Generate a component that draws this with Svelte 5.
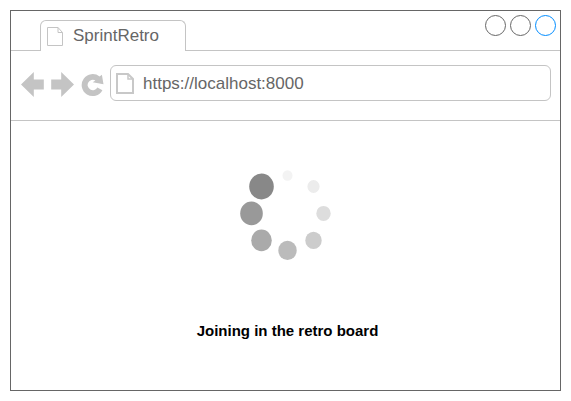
<script>
  const dots = [
    { x: 47.5, y: 15.5, rx: 5, ry: 5.3, fill: '#f3f3f3' },
    { x: 73.5, y: 26.5, rx: 6.1, ry: 6.4, fill: '#ececec' },
    { x: 83.5, y: 53.4, rx: 7.2, ry: 7.5, fill: '#dddddd' },
    { x: 73.5, y: 80.4, rx: 8.2, ry: 8.6, fill: '#cccccc' },
    { x: 47.5, y: 90.4, rx: 9.2, ry: 9.7, fill: '#bbbbbb' },
    { x: 21.5, y: 80.4, rx: 10.3, ry: 10.8, fill: '#aaaaaa' },
    { x: 11.5, y: 53.4, rx: 11.3, ry: 11.9, fill: '#999999' },
    { x: 21.5, y: 26.5, rx: 12.3, ry: 12.9, fill: '#888888' }
  ];
  const controls = ['#666666', '#666666', '#008cff'];
</script>

<div class="window">
  <header class="tabs">
    <div class="tab">
      <svg class="page" width="17" height="20" viewBox="0 0 17 20">
        <path d="M.5 .5H11L15.5 5.5V18.5H.5ZM11 .5V5.5H15.5" fill="none" stroke="#c4c4c4" />
      </svg>
      <span>SprintRetro</span>
    </div>
    <div class="controls">
      {#each controls as color}
        <svg width="21" height="21" viewBox="0 0 21 21">
          <circle cx="10.5" cy="10.5" r="10" fill="none" stroke={color} />
        </svg>
      {/each}
    </div>
  </header>
  <div class="toolbar">
    <svg width="84" height="26" viewBox="0 0 84 26">
      <g fill="#c4c4c4">
        <path d="M0 12.5L12.8 0V7.5H22.8V17.5H12.8V25Z" />
        <path d="M53 12.5L40.2 0V7.5H30.2V17.5H40.2V25Z" />
        <path d="M80.9 2.8L82.5 12.2L71.7 10.3L74.4 8.4A5.2 5.2 0 1 0 76.4 15.4L81.4 18.2A11 11 0 1 1 78.6 4.5Z" />
      </g>
    </svg>
    <div class="address">
      <svg width="18" height="21" viewBox="0 0 18 21">
        <path d="M1 1H12L17 6V20H1Z" fill="none" stroke="#c8c8c8" stroke-width="2" />
        <path d="M12 1V6H17" fill="none" stroke="#c8c8c8" stroke-width="1.5" />
      </svg>
      <span>https://localhost:8000</span>
    </div>
  </div>
  <main>
    <svg width="95" height="102" viewBox="0 0 95 102">
      {#each dots as d}
        <ellipse cx={d.x} cy={d.y} rx={d.rx} ry={d.ry} fill={d.fill} />
      {/each}
    </svg>
    <p>Joining in the retro board</p>
  </main>
</div>

<style>
  :global(body) {
    background: #fff;
  }
  .window {
    box-sizing: border-box;
    width: 551px;
    height: 381px;
    margin: 10px;
    border: 1px solid #666;
    display: flex;
    flex-direction: column;
    font-family: 'Liberation Sans', Arial, sans-serif;
    font-size: 17px;
    color: #666;
  }
  svg {
    display: block;
    flex: none;
  }
  .tabs {
    box-sizing: border-box;
    height: 40px;
    border-bottom: 1px solid #c4c4c4;
    padding: 0 4px 0 29px;
    display: flex;
    justify-content: space-between;
  }
  .tab {
    box-sizing: border-box;
    width: 146px;
    height: 31px;
    margin-top: 9px;
    border: 1px solid #c4c4c4;
    border-bottom: 0;
    border-radius: 6px 6px 0 0;
    background: #fff;
    padding: 6px 0 0 6px;
    display: flex;
    gap: 9px;
    line-height: 18px;
  }
  .controls {
    display: flex;
    gap: 4px;
    padding-top: 4px;
  }
  .toolbar {
    box-sizing: border-box;
    height: 70px;
    border-bottom: 1px solid #c4c4c4;
    padding: 14px 9px 0 10px;
    display: flex;
    gap: 5px;
  }
  .toolbar > svg {
    margin-top: 7px;
  }
  .address {
    box-sizing: border-box;
    flex: 1;
    height: 36px;
    border: 1px solid #c4c4c4;
    border-radius: 6px;
    padding-left: 5px;
    display: flex;
    align-items: center;
    gap: 9px;
  }
  .address span {
    padding-top: 2px;
  }
  main {
    flex: 1;
    display: flex;
    flex-direction: column;
    align-items: center;
    padding: 39px 0 0 4px;
  }
  p {
    margin: 60px 0 0;
    font-size: 15px;
    font-weight: bold;
    line-height: 18px;
    color: #000;
    white-space: nowrap;
  }
</style>
